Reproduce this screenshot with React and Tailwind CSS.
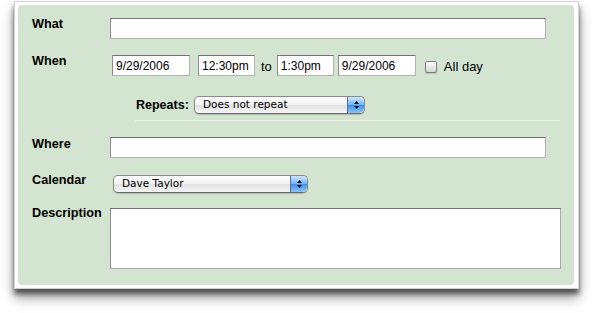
import React from "react";

const sans = "font-['Liberation_Sans',Arial,Helvetica,sans-serif]";
const aqua = "font-['DejaVu_Sans','Lucida_Grande',Verdana,sans-serif]";

function TextBox({ value = "", className = "" }) {
  return (
    <input
      readOnly
      value={value}
      className={`h-[21px] bg-white border border-[#b2b2b2] border-t-[#737373] border-l-[#8e8e8e] pl-[3px] text-[12px] text-black outline-none ${sans} ${className}`}
    />
  );
}

function Stepper() {
  return (
    <div className="w-[17px] self-stretch rounded-r-[5px] border-l border-[#4b73a8] bg-[linear-gradient(#cfe6fc,#74b2f2_50%,#3e8fe9_51%,#8ac4fa)] flex flex-col items-center justify-center gap-[2px]">
      <svg width="5" height="3" viewBox="0 0 5 3"><path d="M2.5 0L5 3H0z" fill="#111" /></svg>
      <svg width="5" height="3" viewBox="0 0 5 3"><path d="M0 0h5L2.5 3z" fill="#111" /></svg>
    </div>
  );
}

function AquaSelect({ value, className = "" }) {
  return (
    <div
      className={`flex items-stretch rounded-[5px] border border-[#8a8a8a] border-b-[#6b6b6b] bg-[linear-gradient(#ffffff,#f1f1f1_50%,#e2e2e2_51%,#f4f4f4)] shadow-[0_1px_1px_rgba(0,0,0,0.18)] ${className}`}
    >
      <div className={`flex-1 flex items-center pl-[8px] text-[10.5px] text-black ${aqua}`}>{value}</div>
      <Stepper />
    </div>
  );
}

function Label({ children, className = "" }) {
  return (
    <div className={`w-[78px] shrink-0 pt-[1px] text-[12.7px] leading-[15px] font-bold text-black ${sans} ${className}`}>
      {children}
    </div>
  );
}

export default function App() {
  return (
    <div className="w-[592px] h-[313px] bg-white overflow-hidden pt-[1px] pl-[14px]">
      {/* ── Window frame ─────────────────────────────────────────────── */}
      <div className="w-[565px] h-[288px] bg-white border border-[#d2d2d2] pt-[3px] pl-[3px] pr-[4px] pb-[3px] shadow-[0_5px_5px_rgba(0,0,0,0.55),0_9px_12px_rgba(0,0,0,0.35)]">
        {/* ── Green form panel ───────────────────────────────────────── */}
        <div className="h-full bg-[#d3e5d1] rounded-[4px] pl-[14px] pt-[11px]">
          {/* What */}
          <div className="flex items-start">
            <Label>What</Label>
            <TextBox className="w-[436px] mt-[2px]" />
          </div>

          {/* When */}
          <div className="flex items-start mt-[14px]">
            <Label>When</Label>
            <div className={`flex items-center mt-[2px] ml-[2px] text-[13px] text-black ${sans}`}>
              <TextBox value="9/29/2006" className="w-[78px]" />
              <TextBox value="12:30pm" className="w-[57px] ml-[8px]" />
              <span className="ml-[6px] mt-[1px]">to</span>
              <TextBox value="1:30pm" className="w-[57px] ml-[5px]" />
              <TextBox value="9/29/2006" className="w-[78px] ml-[4px]" />
              <div className="w-[12px] h-[12px] ml-[9px] mt-[3px] rounded-[2px] border border-[#7d7d7d] bg-[linear-gradient(#ffffff,#e6e6e6_55%,#d4d4d4)] shadow-[0_1px_1px_rgba(0,0,0,0.15)]" />
              <span className="ml-[7px] mt-[2px]">All day</span>
            </div>
          </div>

          {/* Repeats */}
          <div className="flex items-start mt-[19px] ml-[104px]">
            <div className={`w-[58px] shrink-0 text-[12.5px] leading-[15px] font-bold text-black pt-[2px] ${sans}`}>Repeats:</div>
            <AquaSelect value="Does not repeat" className="w-[171px] h-[18px]" />
          </div>
          <div className="h-px bg-[#e6f1e5] mt-[6px] ml-[103px] w-[425px]" />

          {/* Where */}
          <div className="flex items-start mt-[15px]">
            <Label>Where</Label>
            <TextBox className="w-[436px] h-[20px] mt-[1px]" />
          </div>

          {/* Calendar */}
          <div className="flex items-start mt-[14px]">
            <Label>Calendar</Label>
            <AquaSelect value="Dave Taylor" className="w-[195px] h-[18px] mt-[3px] ml-[3px]" />
          </div>

          {/* Description */}
          <div className="flex items-start mt-[12px]">
            <Label>Description</Label>
            <textarea
              readOnly
              className="w-[451px] h-[61px] mt-[3px] bg-white border border-[#a8a8a8] border-t-[#737373] border-l-[#8e8e8e] resize-none outline-none"
            />
          </div>
        </div>
      </div>
    </div>
  );
}
